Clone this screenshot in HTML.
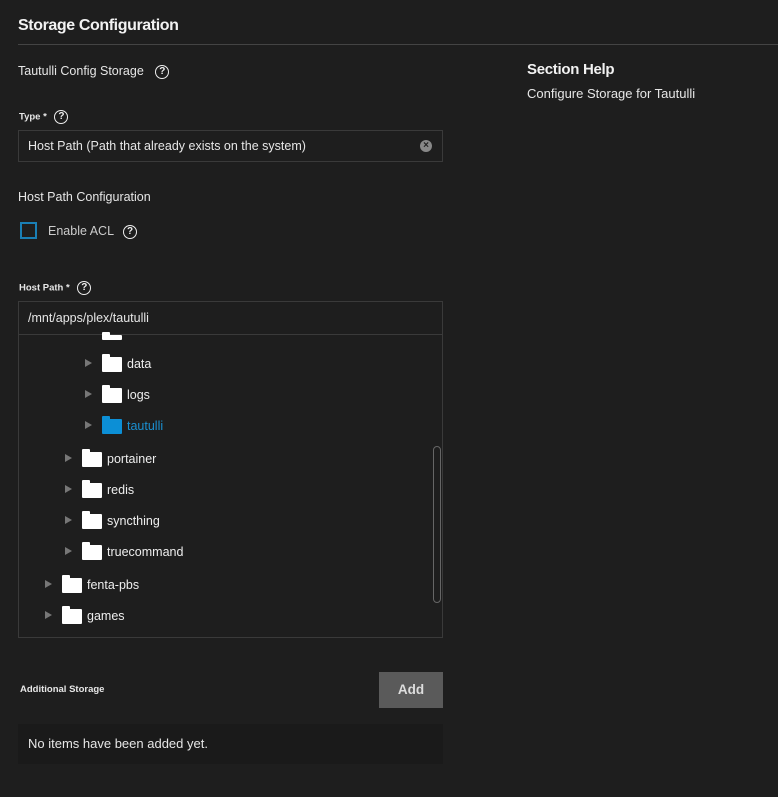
<!DOCTYPE html>
<html><head><style>
body{margin:0;background:#1e1e1e;width:778px;height:797px;overflow:hidden;font-family:"Liberation Sans",sans-serif;color:#e6e6e6;position:relative}
.a{position:absolute;white-space:nowrap}
.q{display:inline-block;width:12px;height:12px;border:1.7px solid #eee;border-radius:50%;font-size:10px;font-weight:bold;text-align:center;line-height:12px;color:#eee;vertical-align:middle}
.box{position:absolute;border:1px solid #3a3a3a;box-sizing:border-box}
.f{position:absolute;width:20px;height:15px;background:#fff;border-radius:1px}
.f:before{content:"";position:absolute;left:0;top:-3px;width:8px;height:4px;background:inherit;border-radius:1px 1px 0 0}
.t{position:absolute;width:0;height:0;border-left:7px solid #777;border-top:4.5px solid transparent;border-bottom:4.5px solid transparent}
.l{position:absolute;font-size:12.5px;color:#eee}
</style></head><body>
<div class="a" style="left:18px;top:17px;font-size:16px;font-weight:bold;color:#f2f2f2;letter-spacing:-0.4px">Storage Configuration</div>
<div class="a" style="left:18px;top:44px;width:760px;height:1px;background:#444"></div>
<div class="a" style="left:18px;top:64px;font-size:12.5px">Tautulli Config Storage <span class="q" style="margin-left:8px">?</span></div>
<div class="a" style="left:527px;top:61px;font-size:15px;font-weight:bold;color:#f2f2f2;letter-spacing:-0.3px">Section Help</div>
<div class="a" style="left:527px;top:86px;font-size:13px">Configure Storage for Tautulli</div>
<div class="a" style="left:19px;top:110px;font-size:9.5px;font-weight:bold">Type * <span class="q" style="margin-left:5px">?</span></div>
<div class="box" style="left:18px;top:130px;width:425px;height:32px"></div>
<div class="a" style="left:28px;top:139px;font-size:12.5px">Host Path (Path that already exists on the system)</div>
<div class="a" style="left:420px;top:140px;width:12px;height:12px;border-radius:50%;background:#888;color:#222;font-size:10px;text-align:center;line-height:12px;font-weight:bold">×</div>
<div class="a" style="left:18px;top:190px;font-size:12.5px">Host Path Configuration</div>
<div class="a" style="left:20px;top:222px;width:13px;height:13px;border:2px solid #1a7fb5"></div>
<div class="a" style="left:48px;top:224px;font-size:12.5px;color:#ccc">Enable ACL <span class="q" style="margin-left:6px">?</span></div>
<div class="a" style="left:19px;top:281px;font-size:9.5px;font-weight:bold">Host Path * <span class="q" style="margin-left:5px">?</span></div>
<div class="box" style="left:18px;top:301px;width:425px;height:337px"></div>
<div class="a" style="left:18px;top:334px;width:425px;height:1px;background:#3a3a3a"></div>
<div class="a" style="left:28px;top:311px;font-size:12.5px">/mnt/apps/plex/tautulli</div>
<div class="f" style="left:102px;top:335px;height:5px"></div>
<div class="a" style="left:433px;top:446px;width:6px;height:155px;border:1px solid #666;border-radius:4px"></div>
<div class="t" style="left:85px;top:359px"></div><div class="f" style="left:102px;top:357px"></div><div class="l" style="left:127px;top:357px">data</div>
<div class="t" style="left:85px;top:390px"></div><div class="f" style="left:102px;top:388px"></div><div class="l" style="left:127px;top:388px">logs</div>
<div class="t" style="left:85px;top:421px"></div><div class="f" style="left:102px;top:419px;background:#0c8fd6"></div><div class="l" style="left:127px;top:419px;color:#1a8fd0">tautulli</div>
<div class="t" style="left:65px;top:454px"></div><div class="f" style="left:82px;top:452px"></div><div class="l" style="left:107px;top:452px">portainer</div>
<div class="t" style="left:65px;top:485px"></div><div class="f" style="left:82px;top:483px"></div><div class="l" style="left:107px;top:483px">redis</div>
<div class="t" style="left:65px;top:516px"></div><div class="f" style="left:82px;top:514px"></div><div class="l" style="left:107px;top:514px">syncthing</div>
<div class="t" style="left:65px;top:547px"></div><div class="f" style="left:82px;top:545px"></div><div class="l" style="left:107px;top:545px">truecommand</div>
<div class="t" style="left:45px;top:580px"></div><div class="f" style="left:62px;top:578px"></div><div class="l" style="left:87px;top:578px">fenta-pbs</div>
<div class="t" style="left:45px;top:611px"></div><div class="f" style="left:62px;top:609px"></div><div class="l" style="left:87px;top:609px">games</div>
<div class="a" style="left:20px;top:684px;font-size:9.5px;font-weight:bold">Additional Storage</div>
<div class="a" style="left:379px;top:672px;width:64px;height:36px;background:#5a5a5a;color:#ddd;font-size:13.5px;font-weight:bold;text-align:center;line-height:36px">Add</div>
<div class="a" style="left:18px;top:724px;width:425px;height:40px;background:#1a1a1a"></div>
<div class="a" style="left:28px;top:736px;font-size:13px">No items have been added yet.</div>
</body></html>
